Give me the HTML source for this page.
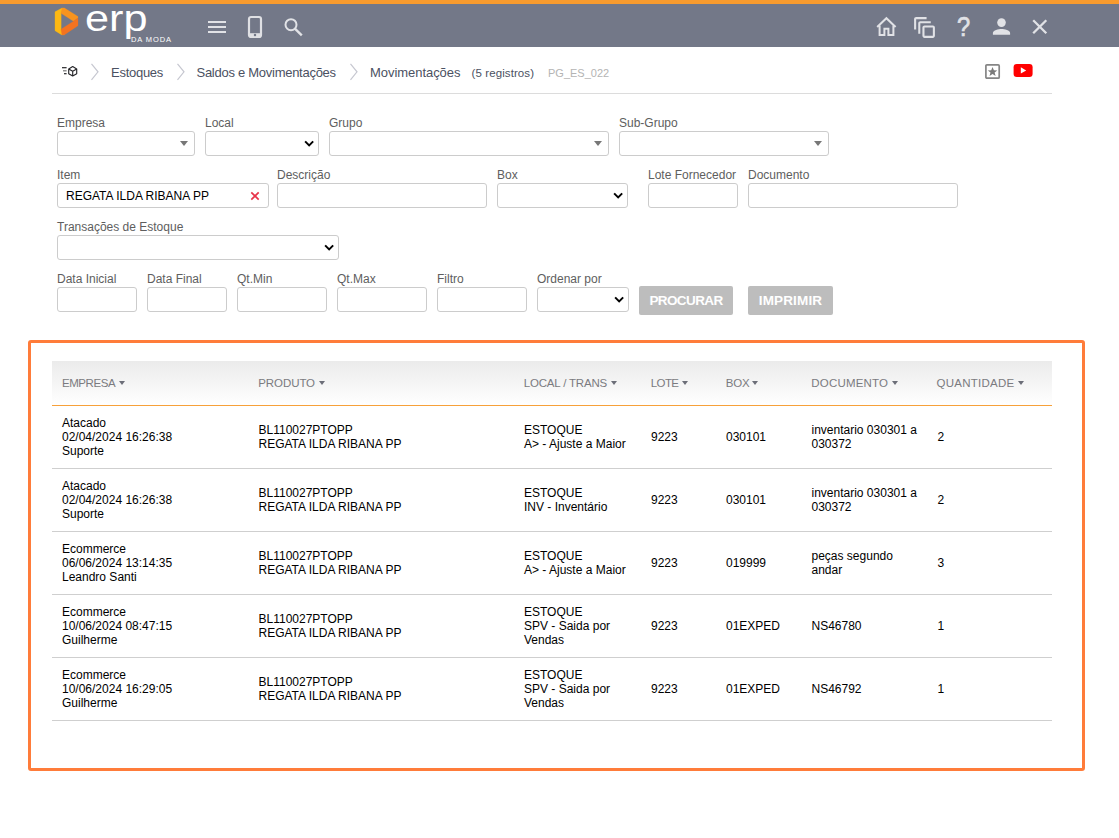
<!DOCTYPE html>
<html lang="pt-BR">
<head>
<meta charset="utf-8">
<title>Movimentações</title>
<style>
*{box-sizing:border-box;}
html,body{margin:0;padding:0;background:#fff;}
body{width:1119px;height:838px;overflow:hidden;position:relative;font-family:"Liberation Sans",sans-serif;color:#000;}
.abs{position:absolute;}
#topbar{position:absolute;left:0;top:0;width:1119px;height:47px;background:#737888;border-top:4px solid #f89b2e;}
#topbar svg{position:absolute;}
.qm{position:absolute;left:956.500px;top:8px;font-size:27.5px;line-height:30px;color:#e1e2e6;-webkit-text-stroke:.7px #e1e2e6;transform:scaleX(.86);transform-origin:0 0;}
.logo-erp{position:absolute;left:84.600px;top:-4.800px;font-size:36px;line-height:40px;color:#fff;transform:scaleX(1.2);transform-origin:0 0;}
.logo-sub{position:absolute;left:131px;top:31px;font-size:7.5px;line-height:9px;color:#fff;letter-spacing:.9px;}
#crumbs{position:absolute;left:52px;top:48px;width:1000px;height:46px;border-bottom:1px solid #dcdcdc;}
.bc{position:absolute;top:16.5px;font-size:13px;line-height:16px;color:#4b5162;white-space:nowrap;}
.bc.s{font-size:11.5px;top:17px;color:#4b5162;}
.bc.c{font-size:11px;top:17px;color:#b4b4b4;}
.chev{position:absolute;top:15px;width:8px;height:18px;}
label.l{position:absolute;font-size:12px;line-height:14px;color:#5e5e5e;white-space:nowrap;}
.inp{position:absolute;height:25px;border:1px solid #ccc;border-radius:3px;background:#fff;}
.inp .tri{position:absolute;right:6px;top:9px;width:0;height:0;border-left:4px solid transparent;border-right:4px solid transparent;border-top:5px solid #777;}
.inp .ch{position:absolute;right:3.300px;top:7.800px;width:10.300px;height:7.500px;}
.inp .val{position:absolute;left:8px;top:5px;font-size:12px;line-height:14px;color:#000;white-space:nowrap;}
.inp .x{position:absolute;left:192px;top:7px;width:10px;height:10px;}
.btn{position:absolute;top:286px;height:29px;border-radius:2px;background:#bdbdbd;color:#fff;font-size:13.5px;line-height:29px;text-align:center;font-weight:bold;}
#panel{position:absolute;left:28px;top:340px;width:1057px;height:431px;border:3px solid #ff7c3a;border-radius:3px;}
#thead{position:absolute;left:52px;top:361px;width:1000px;height:45px;background:linear-gradient(#ebebeb,#ffffff);border-bottom:1px solid #f7a13a;}
.th{position:absolute;top:14.700px;font-size:11.5px;line-height:14px;color:#7b7b80;white-space:nowrap;}
.car{position:absolute;top:20.300px;width:0;height:0;border-left:3.700px solid transparent;border-right:3.700px solid transparent;border-top:4.300px solid #6c6e78;margin-left:-.2px;}
.row{position:absolute;left:52px;width:1000px;height:63px;border-bottom:1px solid #cfcfcf;}
.cell{position:absolute;top:0;height:62px;display:flex;flex-direction:column;justify-content:center;font-size:12px;line-height:14px;color:#000;white-space:nowrap;}
</style>
</head>
<body>
<div id="topbar">
<svg style="left:54px;top:3px" width="26" height="29" viewBox="0 0 26 29" stroke-linejoin="round" stroke-width="0.200">
<path d="M0.940 4.800 L7.900 1 L10.600 1.100 L7.200 6.240 L7.200 22.130 L10.600 27.700 L7.700 27.900 L0.940 23.700 Z" fill="#fcb813" stroke="#fcb813"/>
<path d="M8 1 L10.600 1.100 L24 9.500 L24 10.900 L19.420 14.190 L6.960 6.240 Z" fill="#f7941e" stroke="#f7941e"/>
<path d="M19.420 14.190 L24 10.900 L24 18.700 L10.600 27.700 L7.900 27.900 L6.960 22.130 Z" fill="#f37321" stroke="#f37321"/>
</svg>
<div class="logo-erp">erp</div>
<div class="logo-sub">DA MODA</div>
<svg style="left:208px;top:16.500px" width="18" height="12" viewBox="0 0 18 12"><path d="M0 1h18M0 6h18M0 11h18" stroke="#e1e2e6" stroke-width="2" fill="none"/></svg>
<svg style="left:247px;top:11px" width="16" height="24" viewBox="0 0 16 24"><rect x="2" y="2" width="12" height="20" rx="2" ry="2" fill="none" stroke="#dfe0e4" stroke-width="2.2"/><rect x="2" y="18.200" width="12" height="3.800" fill="#dfe0e4"/><circle cx="8" cy="20" r="1.250" fill="#737888"/></svg>
<svg style="left:283px;top:13px" width="22" height="20" viewBox="0 0 22 20"><circle cx="8" cy="7.700" r="5.500" fill="none" stroke="#e1e2e6" stroke-width="2"/><path d="M11.900 11.600 L18.800 18.300" stroke="#e1e2e6" stroke-width="2.4" fill="none"/></svg>
<svg style="left:875px;top:11px" width="24" height="24" viewBox="0 0 24 24" fill="none" stroke="#e1e2e6" stroke-width="2"><path d="M2.2 12 L11.4 3.2 L20.6 12"/><path d="M4.6 10.5 V20 H9.4 V13.8 H13.4 V20 H18.4 V10.5"/></svg>
<svg style="left:912.200px;top:10.900px" width="25" height="25" viewBox="0 0 24 24" fill="#e1e2e6"><path d="M14 2H4c-1.1 0-2 .9-2 2v10h2V4h10V2zm4 4H8c-1.1 0-2 .9-2 2v10h2V8h10V6zm2 4h-8c-1.1 0-2 .9-2 2v8c0 1.100.9 2 2 2h8c1.100 0 2-.9 2-2v-8c0-1.100-.9-2-2-2zm0 10h-8v-8h8v8z"/></svg>
<div class="qm">?</div>
<svg style="left:989px;top:11px" width="24" height="24" viewBox="0 0 24 24" fill="#e1e2e6"><circle cx="12.500" cy="7.600" r="4.300"/><path d="M3.900 19.700 v-1.700 c0-2.900 5.600-4 8.600-4 s8.600 1.100 8.600 4 v1.700z"/></svg>
<svg style="left:1031px;top:14px" width="18" height="18" viewBox="0 0 18 18"><path d="M2.200 2.200 L15.300 15.300 M15.300 2.200 L2.200 15.300" stroke="#e1e2e6" stroke-width="2.300" fill="none"/></svg>
</div>
<div id="crumbs">
<svg style="position:absolute;left:9px;top:17px" width="18" height="13" viewBox="0 0 18 13" fill="none" stroke="#26262a" stroke-width="1.150">
<path d="M1 2.700 H5.600" stroke-width="1.200"/><path d="M2 5.800 H5.600" stroke="#777" stroke-width="1.200"/><path d="M3 8.700 H5.600" stroke-width="1.200"/>
<path d="M11.700 1.600 L15.700 3.900 V8.700 L11.700 11 L7.700 8.700 V3.900 Z M7.700 3.900 L11.700 6.200 L15.700 3.900 M11.700 6.200 V11" stroke-linejoin="round"/>
</svg>
<svg class="chev" style="left:39px" width="8" height="18" viewBox="0 0 8 18"><path d="M0.5 0.8 L7 8.8 L0.5 16.8" fill="none" stroke="#c6c7d0" stroke-width="1.200"/></svg>
<span class="bc" style="left:59px;letter-spacing:-.27px">Estoques</span>
<svg class="chev" style="left:125px" width="8" height="18" viewBox="0 0 8 18"><path d="M0.5 0.8 L7 8.8 L0.5 16.8" fill="none" stroke="#c6c7d0" stroke-width="1.200"/></svg>
<span class="bc" style="left:144.500px;letter-spacing:-.27px">Saldos e Movimentações</span>
<svg class="chev" style="left:298px" width="8" height="18" viewBox="0 0 8 18"><path d="M0.5 0.8 L7 8.8 L0.5 16.8" fill="none" stroke="#c6c7d0" stroke-width="1.200"/></svg>
<span class="bc" style="left:318px;letter-spacing:-.05px">Movimentações</span>
<span class="bc s" style="left:419.500px;letter-spacing:.1px">(5 registros)</span>
<span class="bc c" style="left:496px">PG_ES_022</span>
<svg style="position:absolute;left:932.600px;top:15.800px" width="16" height="16" viewBox="0 0 16 16"><rect x="0.900" y="0.900" width="13.300" height="13.300" rx="1" fill="#fff" stroke="#858585" stroke-width="1.700"/><path d="M7.550 2.900 L8.900 6.300 L12.300 6.400 L9.600 8.600 L10.600 12 L7.550 10.100 L4.500 12 L5.500 8.600 L2.800 6.400 L6.200 6.300 Z" fill="#7a7a7a"/></svg>
<svg style="position:absolute;left:961.100px;top:15.200px" width="20" height="15" viewBox="0 0 20 15"><rect x="0.600" y="1" width="19" height="13" rx="3.200" fill="#ff0000"/><path d="M7.800 4.200 L13.200 7.400 L7.800 10.600 Z" fill="#fff"/></svg>
</div>
<div id="form">
<label class="l" style="left:57px;top:115.5px">Empresa</label>
<div class="inp" style="left:57px;top:131px;width:138px"><span class="tri"></span></div>
<label class="l" style="left:205px;top:115.5px">Local</label>
<div class="inp" style="left:205px;top:131px;width:114px"><svg class="ch" viewBox="0 0 11 8"><path d="M1.200 1.500 L5.500 5.800 L9.800 1.500" fill="none" stroke="#000" stroke-width="2.100"/></svg></div>
<label class="l" style="left:329px;top:115.5px">Grupo</label>
<div class="inp" style="left:329px;top:131px;width:280px"><span class="tri"></span></div>
<label class="l" style="left:619px;top:115.5px">Sub-Grupo</label>
<div class="inp" style="left:619px;top:131px;width:210px"><span class="tri"></span></div>
<label class="l" style="left:57px;top:167.5px">Item</label>
<div class="inp" style="left:57px;top:183px;width:212px"><span class="val">REGATA ILDA RIBANA PP</span><svg class="x" viewBox="0 0 10 10"><path d="M1.300 1.300 L8.700 8.700 M8.700 1.300 L1.300 8.700" stroke="#e8344a" stroke-width="1.700" fill="none"/></svg></div>
<label class="l" style="left:277px;top:167.5px">Descrição</label>
<div class="inp" style="left:277px;top:183px;width:210px"></div>
<label class="l" style="left:497px;top:167.5px">Box</label>
<div class="inp" style="left:497px;top:183px;width:131px"><svg class="ch" viewBox="0 0 11 8"><path d="M1.200 1.500 L5.500 5.800 L9.800 1.500" fill="none" stroke="#000" stroke-width="2.100"/></svg></div>
<label class="l" style="left:648px;top:167.5px">Lote Fornecedor</label>
<div class="inp" style="left:648px;top:183px;width:90px"></div>
<label class="l" style="left:748px;top:167.5px">Documento</label>
<div class="inp" style="left:748px;top:183px;width:210px"></div>
<label class="l" style="left:57px;top:219.5px">Transações de Estoque</label>
<div class="inp" style="left:57px;top:235px;width:282px"><svg class="ch" viewBox="0 0 11 8"><path d="M1.200 1.500 L5.500 5.800 L9.800 1.500" fill="none" stroke="#000" stroke-width="2.100"/></svg></div>
<label class="l" style="left:57px;top:271.5px">Data Inicial</label>
<div class="inp" style="left:57px;top:287px;width:80px"></div>
<label class="l" style="left:147px;top:271.5px">Data Final</label>
<div class="inp" style="left:147px;top:287px;width:80px"></div>
<label class="l" style="left:237px;top:271.5px">Qt.Min</label>
<div class="inp" style="left:237px;top:287px;width:90px"></div>
<label class="l" style="left:337px;top:271.5px">Qt.Max</label>
<div class="inp" style="left:337px;top:287px;width:90px"></div>
<label class="l" style="left:437px;top:271.5px">Filtro</label>
<div class="inp" style="left:437px;top:287px;width:90px"></div>
<label class="l" style="left:537px;top:271.5px">Ordenar por</label>
<div class="inp" style="left:537px;top:287px;width:92px"><svg class="ch" viewBox="0 0 11 8"><path d="M1.200 1.500 L5.500 5.800 L9.800 1.500" fill="none" stroke="#000" stroke-width="2.100"/></svg></div>
<div class="btn" style="left:639px;width:94px;letter-spacing:-.6px">PROCURAR</div>
<div class="btn" style="left:748px;width:85px;letter-spacing:.15px">IMPRIMIR</div>
</div>
<div id="panel"></div>
<div id="thead">
<span class="th" style="left:9.90px;letter-spacing:-0.43px">EMPRESA</span><i class="car" style="left:67.00px"></i>
<span class="th" style="left:206.25px;letter-spacing:-0.08px">PRODUTO</span><i class="car" style="left:266.75px"></i>
<span class="th" style="left:471.75px;letter-spacing:-0.18px">LOCAL / TRANS</span><i class="car" style="left:559.25px"></i>
<span class="th" style="left:598.75px;letter-spacing:-0.6px">LOTE</span><i class="car" style="left:630.00px"></i>
<span class="th" style="left:673.75px;letter-spacing:-0.18px">BOX</span><i class="car" style="left:700.50px"></i>
<span class="th" style="left:759.25px;letter-spacing:0.2px">DOCUMENTO</span><i class="car" style="left:840.50px"></i>
<span class="th" style="left:884.50px;letter-spacing:0.26px">QUANTIDADE</span><i class="car" style="left:966.00px"></i>
</div>
<div id="rows">
<div class="row" style="top:406px"><div class="cell" style="left:10px">Atacado<br>02/04/2024 16:26:38<br>Suporte</div><div class="cell" style="left:206.5px">BL110027PTOPP<br>REGATA ILDA RIBANA PP</div><div class="cell" style="left:472px">ESTOQUE<br>A&gt; - Ajuste a Maior</div><div class="cell" style="left:599px">9223</div><div class="cell" style="left:674px">030101</div><div class="cell" style="left:759.5px">inventario 030301 a<br>030372</div><div class="cell" style="left:885.5px">2</div></div>
<div class="row" style="top:469px"><div class="cell" style="left:10px">Atacado<br>02/04/2024 16:26:38<br>Suporte</div><div class="cell" style="left:206.5px">BL110027PTOPP<br>REGATA ILDA RIBANA PP</div><div class="cell" style="left:472px">ESTOQUE<br>INV - Inventário</div><div class="cell" style="left:599px">9223</div><div class="cell" style="left:674px">030101</div><div class="cell" style="left:759.5px">inventario 030301 a<br>030372</div><div class="cell" style="left:885.5px">2</div></div>
<div class="row" style="top:532px"><div class="cell" style="left:10px">Ecommerce<br>06/06/2024 13:14:35<br>Leandro Santi</div><div class="cell" style="left:206.5px">BL110027PTOPP<br>REGATA ILDA RIBANA PP</div><div class="cell" style="left:472px">ESTOQUE<br>A&gt; - Ajuste a Maior</div><div class="cell" style="left:599px">9223</div><div class="cell" style="left:674px">019999</div><div class="cell" style="left:759.5px">peças segundo<br>andar</div><div class="cell" style="left:885.5px">3</div></div>
<div class="row" style="top:595px"><div class="cell" style="left:10px">Ecommerce<br>10/06/2024 08:47:15<br>Guilherme</div><div class="cell" style="left:206.5px">BL110027PTOPP<br>REGATA ILDA RIBANA PP</div><div class="cell" style="left:472px">ESTOQUE<br>SPV - Saida por<br>Vendas</div><div class="cell" style="left:599px">9223</div><div class="cell" style="left:674px">01EXPED</div><div class="cell" style="left:759.5px">NS46780</div><div class="cell" style="left:885.5px">1</div></div>
<div class="row" style="top:658px"><div class="cell" style="left:10px">Ecommerce<br>10/06/2024 16:29:05<br>Guilherme</div><div class="cell" style="left:206.5px">BL110027PTOPP<br>REGATA ILDA RIBANA PP</div><div class="cell" style="left:472px">ESTOQUE<br>SPV - Saida por<br>Vendas</div><div class="cell" style="left:599px">9223</div><div class="cell" style="left:674px">01EXPED</div><div class="cell" style="left:759.5px">NS46792</div><div class="cell" style="left:885.5px">1</div></div>
</div>
</body>
</html>
